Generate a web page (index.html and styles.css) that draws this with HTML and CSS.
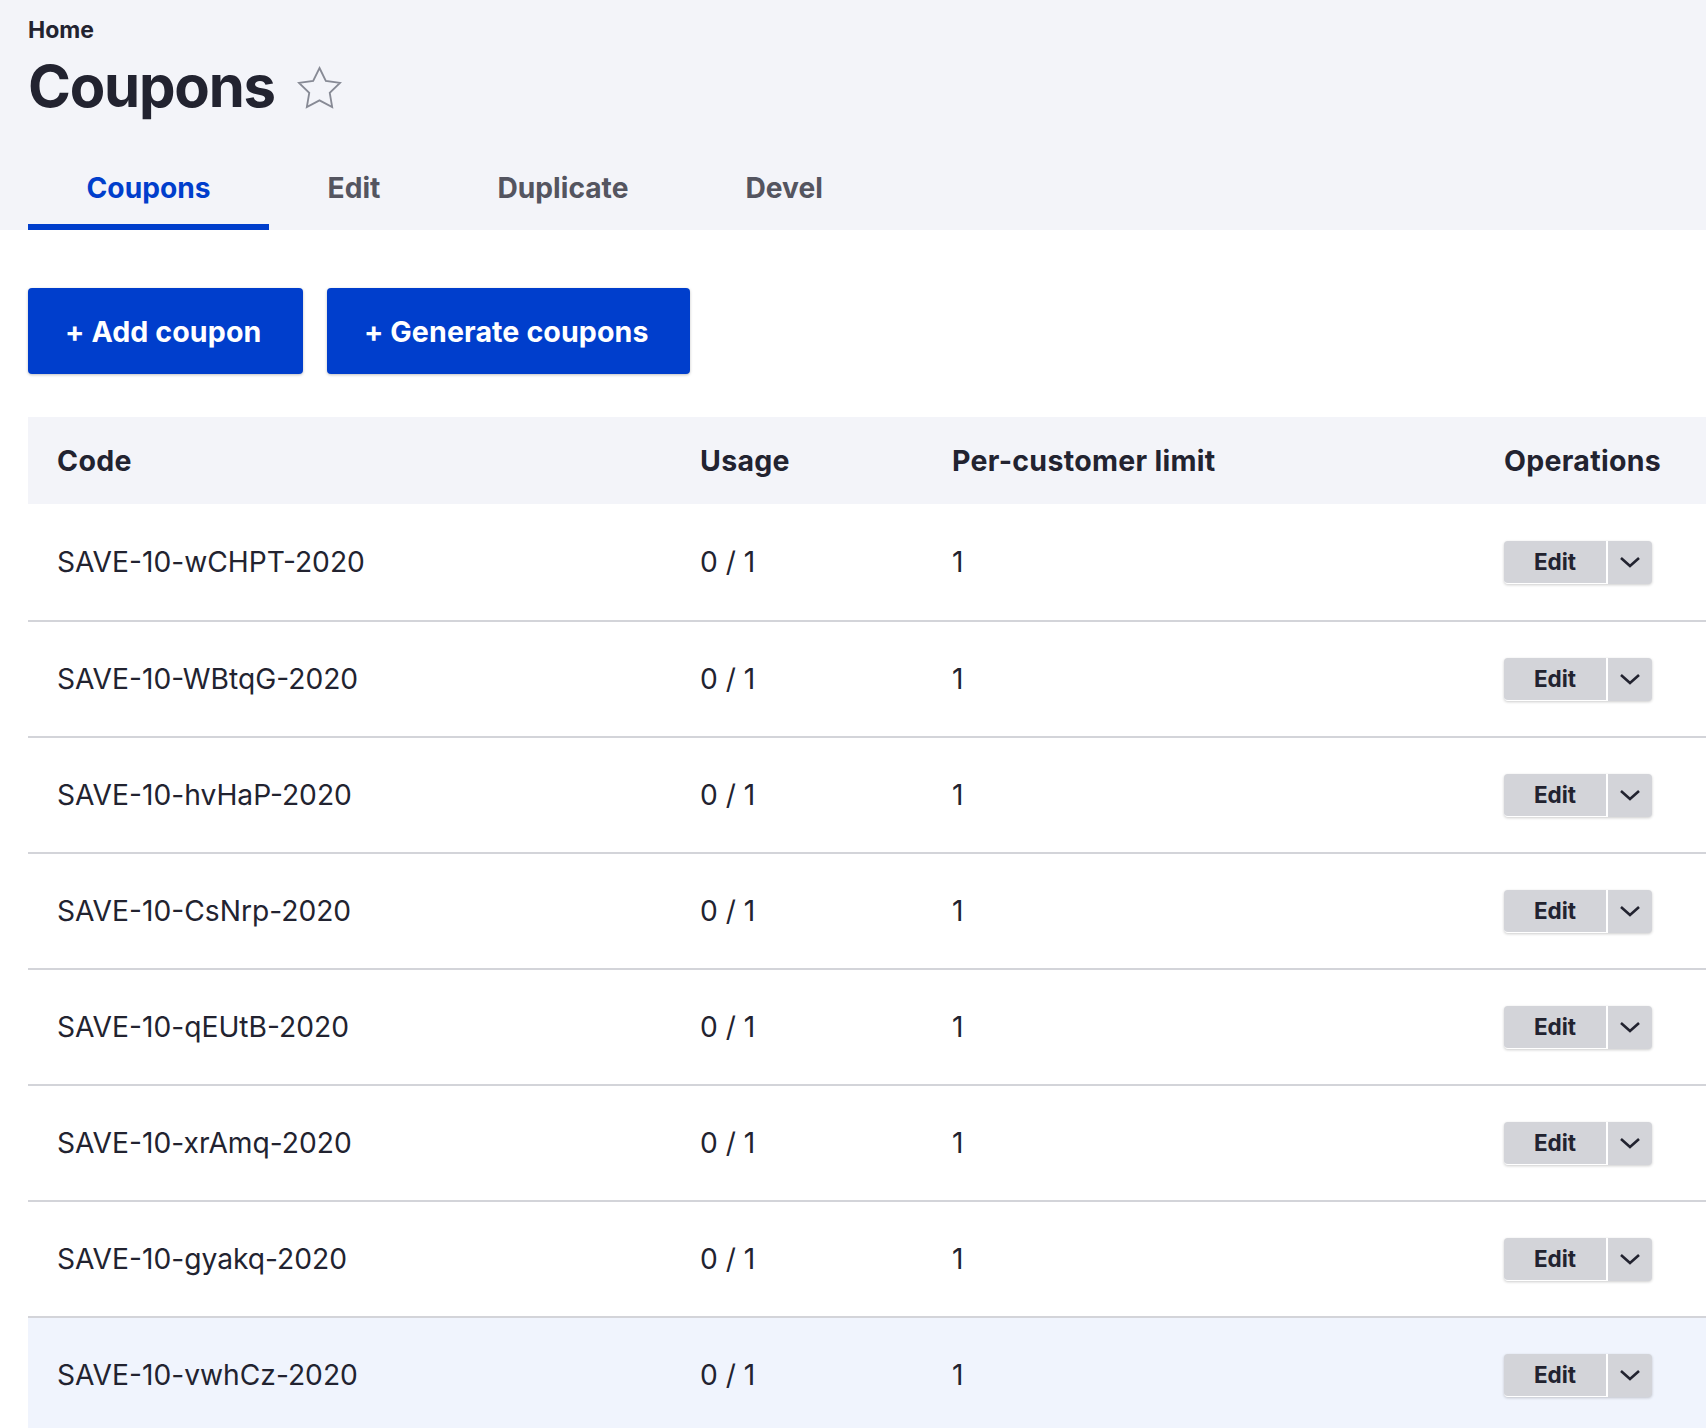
FILE: index.html
```html
<!DOCTYPE html>
<html lang="en">
<head>
<meta charset="utf-8">
<title>Coupons</title>
<link rel="stylesheet" href="styles.css">
</head>
<body>
<header class="page-header">
  <div class="breadcrumb">Home</div>
  <h1 class="page-title">Coupons
    <svg class="star" width="41" height="39" viewBox="2 2 20 19.02" aria-hidden="true"><polygon points="12,2 15.09,8.26 22,9.27 17,14.14 18.18,21.02 12,17.77 5.82,21.02 7,14.14 2,9.27 8.91,8.26" fill="none" stroke="#878a95" stroke-width="0.9" stroke-linejoin="miter"/></svg>
  </h1>
  <nav class="tabs">
    <a class="tab tab-active">Coupons</a>
    <a class="tab">Edit</a>
    <a class="tab">Duplicate</a>
    <a class="tab">Devel</a>
  </nav>
</header>
<main class="content">
  <div class="actions">
    <a class="button">+ Add coupon</a>
    <a class="button">+ Generate coupons</a>
  </div>
  <table class="coupons">
    <colgroup>
      <col class="col-code"><col class="col-usage"><col class="col-limit"><col class="col-ops">
    </colgroup>
    <thead>
      <tr><th>Code</th><th>Usage</th><th>Per-customer limit</th><th>Operations</th></tr>
    </thead>
    <tbody>
      <tr class="row-first"><td>SAVE-10-wCHPT-2020</td><td>0 / 1</td><td>1</td><td><div class="dropbutton"><span class="db-main">Edit</span><span class="db-toggle"><svg width="22" height="12" viewBox="0 0 22 12"><polyline points="2,2 11,10 20,2" fill="none" stroke="#222330" stroke-width="2.6"/></svg></span></div></td></tr>
      <tr><td>SAVE-10-WBtqG-2020</td><td>0 / 1</td><td>1</td><td><div class="dropbutton"><span class="db-main">Edit</span><span class="db-toggle"><svg width="22" height="12" viewBox="0 0 22 12"><polyline points="2,2 11,10 20,2" fill="none" stroke="#222330" stroke-width="2.6"/></svg></span></div></td></tr>
      <tr><td>SAVE-10-hvHaP-2020</td><td>0 / 1</td><td>1</td><td><div class="dropbutton"><span class="db-main">Edit</span><span class="db-toggle"><svg width="22" height="12" viewBox="0 0 22 12"><polyline points="2,2 11,10 20,2" fill="none" stroke="#222330" stroke-width="2.6"/></svg></span></div></td></tr>
      <tr><td>SAVE-10-CsNrp-2020</td><td>0 / 1</td><td>1</td><td><div class="dropbutton"><span class="db-main">Edit</span><span class="db-toggle"><svg width="22" height="12" viewBox="0 0 22 12"><polyline points="2,2 11,10 20,2" fill="none" stroke="#222330" stroke-width="2.6"/></svg></span></div></td></tr>
      <tr><td>SAVE-10-qEUtB-2020</td><td>0 / 1</td><td>1</td><td><div class="dropbutton"><span class="db-main">Edit</span><span class="db-toggle"><svg width="22" height="12" viewBox="0 0 22 12"><polyline points="2,2 11,10 20,2" fill="none" stroke="#222330" stroke-width="2.6"/></svg></span></div></td></tr>
      <tr><td>SAVE-10-xrAmq-2020</td><td>0 / 1</td><td>1</td><td><div class="dropbutton"><span class="db-main">Edit</span><span class="db-toggle"><svg width="22" height="12" viewBox="0 0 22 12"><polyline points="2,2 11,10 20,2" fill="none" stroke="#222330" stroke-width="2.6"/></svg></span></div></td></tr>
      <tr><td>SAVE-10-gyakq-2020</td><td>0 / 1</td><td>1</td><td><div class="dropbutton"><span class="db-main">Edit</span><span class="db-toggle"><svg width="22" height="12" viewBox="0 0 22 12"><polyline points="2,2 11,10 20,2" fill="none" stroke="#222330" stroke-width="2.6"/></svg></span></div></td></tr>
      <tr class="row-hover"><td>SAVE-10-vwhCz-2020</td><td>0 / 1</td><td>1</td><td><div class="dropbutton"><span class="db-main">Edit</span><span class="db-toggle"><svg width="22" height="12" viewBox="0 0 22 12"><polyline points="2,2 11,10 20,2" fill="none" stroke="#222330" stroke-width="2.6"/></svg></span></div></td></tr>
    </tbody>
  </table>
</main>
</body>
</html>
```

FILE: styles.css
```css
html, body {
  margin: 0;
  padding: 0;
}
body {
  background: #ffffff;
  color: #222330;
  font-family: Inter, "Noto Sans", sans-serif;
  overflow: hidden;
}
.page-header {
  background: #f3f4f9;
  padding: 16px 0 0 28px;
}
.breadcrumb {
  font-size: 23px;
  font-weight: 700;
  line-height: 28px;
  color: #222330;
}
.page-title {
  margin: 7px 0 0 0;
  font-size: 58px;
  font-weight: 700;
  line-height: 70px;
  letter-spacing: -1.2px;
  display: flex;
  align-items: center;
  gap: 24px;
}
.star {
  overflow: visible;
  margin-top: 2px;
}
.tabs {
  display: flex;
  margin-top: 29px;
}
.tab {
  display: block;
  font-size: 28.2px;
  font-weight: 700;
  line-height: 28px;
  padding: 24px 58.5px 22px;
  border-bottom: 6px solid transparent;
  color: #545560;
}
.tab-active {
  color: #003ecc;
  border-bottom-color: #003ecc;
}
.content {
  padding: 58px 0 0 28px;
}
.actions {
  display: flex;
  gap: 24px;
}
.button {
  display: block;
  background: #003ecc;
  color: #ffffff;
  font-size: 28.6px;
  font-weight: 700;
  letter-spacing: 0.1px;
  line-height: 88px;
  height: 86px;
  padding: 0 41.5px 0 37px;
  border-radius: 4px;
  box-shadow: 0 1px 3px rgba(0, 0, 0, 0.25);
}
.coupons {
  margin-top: 43px;
  width: 1678px;
  table-layout: fixed;
  border-collapse: collapse;
}
.col-code { width: 643px; }
.col-usage { width: 252px; }
.col-limit { width: 552px; }
.col-ops { width: 231px; }
.coupons th {
  background: #f3f4f9;
  height: 87px;
  padding: 0 29px;
  text-align: left;
  font-size: 28.5px;
  letter-spacing: 0.3px;
  font-weight: 700;
  color: #222330;
}
.coupons td {
  height: 114px;
  padding: 0 29px;
  font-size: 28.2px;
  font-weight: 400;
  color: #222330;
  border-bottom: 2px solid #d3d4d9;
}
.coupons .row-first td {
  height: 116px;
}
.row-hover td {
  background: #f0f4fd;
}
.dropbutton {
  display: flex;
  width: 148px;
  height: 43px;
  background: #d3d4d9;
  border-radius: 4px;
  box-shadow: 0 1px 3px rgba(0, 0, 0, 0.2);
}
.db-main {
  width: 102px;
  height: 42px;
  border-right: 2px solid #ffffff;
  border-bottom: 1px solid #ffffff;
  border-radius: 4px 0 0 4px;
  font-size: 22.5px;
  font-weight: 700;
  line-height: 42px;
  text-align: center;
  color: #222330;
}
.db-toggle {
  flex: 1;
  display: flex;
  align-items: center;
  justify-content: center;
}
```
